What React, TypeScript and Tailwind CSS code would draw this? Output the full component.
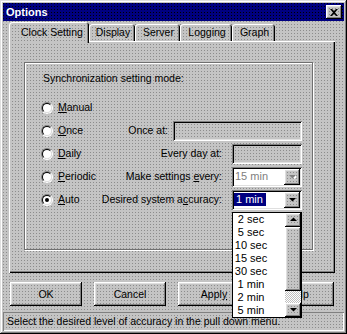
import React from "react"

const dither =
  "bg-[#c4c4c4] bg-[image:conic-gradient(from_270deg_at_1px_1px,#8c8c8c_90deg,#c4c4c4_0)] bg-[length:3px_3px]"
const raised = "shadow-[inset_-1px_-1px_#000,inset_1px_1px_#fff,inset_-2px_-2px_#808080,inset_2px_2px_#dfdfdf]"
const sunken = "shadow-[inset_1px_1px_#808080,inset_-1px_-1px_#fff,inset_2px_2px_#000,inset_-2px_-2px_#dfdfdf]"

function Radio({ checked }: { checked?: boolean }) {
  return (
    <div className="w-[12px] h-[12px] rounded-full border border-t-[#808080] border-l-[#808080] border-r-white border-b-white flex">
      <div className="flex-1 rounded-full border border-t-black border-l-black border-r-[#dfdfdf] border-b-[#dfdfdf] bg-white flex items-center justify-center">
        {checked && <div className="w-[4px] h-[4px] rounded-full bg-black" />}
      </div>
    </div>
  )
}

function Arrow({ up, disabled }: { up?: boolean; disabled?: boolean }) {
  return (
    <svg width="7" height="5" viewBox="0 0 7 5" className="block">
      {disabled && <path d="M2 1h7L5.5 5z" fill="#fff" />}
      <path d={up ? "M3.5 0.5L7 4H0z" : "M0 1h7L3.5 4.5z"} fill={disabled ? "#808080" : "#000"} />
    </svg>
  )
}

function DropButton({ disabled }: { disabled?: boolean }) {
  return (
    <div className={`w-[16px] h-[16px] ${dither} ${raised} flex items-center justify-center`}>
      <Arrow disabled={disabled} />
    </div>
  )
}

const tabs = [
  { label: "Display", w: "w-[46px]" },
  { label: "Server", w: "w-[45px]" },
  { label: "Logging", w: "w-[52px]" },
  { label: "Graph", w: "w-[43px]" },
]

const accuracy = ["2 sec", "5 sec", "10 sec", "15 sec", "30 sec", "1 min", "2 min", "5 min"]

export default function App() {
  return (
    <div
      className={`w-[347px] h-[334px] p-[3px] flex flex-col ${dither} shadow-[inset_-1px_-1px_#000,inset_1px_1px_#dfdfdf,inset_-2px_-2px_#808080,inset_2px_2px_#fff] font-['Liberation_Sans',Arial,sans-serif] text-[10.5px] text-black leading-[13px]`}
    >
      {/* title bar */}
      <div className="h-[18px] flex items-center pl-[3px] pr-[2px] bg-[#000080] bg-[image:conic-gradient(from_270deg_at_1px_1px,#000_90deg,#000080_0)] bg-[length:3px_3px]">
        <span className="text-white font-bold text-[11px]">Options</span>
        <div className={`ml-auto w-[16px] h-[14px] ${dither} ${raised} flex items-center justify-center`}>
          <svg width="8" height="7" viewBox="0 0 8 7">
            <path d="M0 0h2l2 2 2-2h2L5 3.5 8 7H6L4 5 2 7H0l3-3.5z" fill="#000" />
          </svg>
        </div>
      </div>

      {/* tabs */}
      <div className="mt-[1px] ml-[6px] w-[326px]">
        <div className="flex items-end h-[19px] relative z-10">
          <div
            className={`h-[21px] -mb-[2px] w-[80px] pl-[12px] flex items-center ${dither} rounded-t-[3px] shadow-[inset_1px_1px_#fff,inset_-1px_0_#000,inset_-2px_0_#808080]`}
          >
            Clock Setting
          </div>
          {tabs.map((t) => (
            <div
              key={t.label}
              className={`h-[17px] ${t.w} pl-[2px] flex items-center justify-center ${dither} rounded-t-[3px] shadow-[inset_1px_1px_#fff,inset_-1px_0_#000,inset_-2px_0_#808080]`}
            >
              {t.label}
            </div>
          ))}
        </div>

        <div className={`h-[232px] pt-[21px] pl-[15px] ${dither} shadow-[inset_1px_1px_#fff,inset_-1px_-1px_#000,inset_-2px_-2px_#808080]`}>
          <div className="w-[289px] h-[188px] border border-[#707070] shadow-[inset_1px_1px_#fff,1px_1px_#fff] pt-[9px]">
            <div className="pl-[18px]">Synchronization setting mode:</div>

            <div className="mt-[11px]">
              <div className="h-[23px] flex items-center pl-[16px]">
                <Radio />
                <span className="ml-[5px]">
                  <span className="underline">M</span>anual
                </span>
              </div>

              <div className="h-[23px] flex items-center pl-[16px] pr-[10px]">
                <Radio />
                <span className="ml-[5px]">
                  <span className="underline">O</span>nce
                </span>
                <span className="ml-auto mr-[5px]">Once at:</span>
                <div className={`w-[129px] h-[20px] ${dither} ${sunken}`} />
              </div>

              <div className="h-[23px] flex items-center pl-[16px] pr-[10px]">
                <Radio />
                <span className="ml-[5px]">
                  <span className="underline">D</span>aily
                </span>
                <span className="ml-auto mr-[10px]">Every day at:</span>
                <div className={`w-[70px] h-[20px] ${dither} ${sunken}`} />
              </div>

              <div className="h-[23px] flex items-center pl-[16px] pr-[10px]">
                <Radio />
                <span className="ml-[5px]">
                  <span className="underline">P</span>eriodic
                </span>
                <span className="ml-auto mr-[10px]">
                  Make settings <span className="underline">e</span>very:
                </span>
                <div className={`w-[70px] h-[20px] bg-white ${sunken} flex items-center pl-[3px] pr-[2px]`}>
                  <span className="text-[#808080] text-[11px]">15 min</span>
                  <div className="ml-auto">
                    <DropButton disabled />
                  </div>
                </div>
              </div>

              <div className="h-[23px] flex items-center pl-[16px] pr-[10px]">
                <Radio checked />
                <span className="ml-[5px]">
                  <span className="underline">A</span>uto
                </span>
                <span className="ml-auto mr-[10px]">
                  Desired system a<span className="underline">c</span>curacy:
                </span>
                <div className={`relative w-[70px] h-[20px] bg-white ${sunken} flex items-center pl-[2px] pr-[2px]`}>
                  <span className="bg-[#000080] text-white text-[11px] pl-[2px] pr-[3px] leading-[13px]">1 min</span>
                  <div className="ml-auto">
                    <DropButton />
                  </div>

                  {/* open drop-down list */}
                  <div className="absolute left-0 top-[22px] w-[70px] h-[106px] border border-black bg-white z-20 flex text-[11px]">
                    <div className="flex-1">
                      {accuracy.map((a) => (
                        <div key={a} className="h-[13px] w-[36px] text-center leading-[13px]">
                          {a}
                        </div>
                      ))}
                    </div>
                    <div className="w-[16px] flex flex-col">
                      <div className={`h-[14px] ${dither} ${raised} flex items-center justify-center`}>
                        <Arrow up />
                      </div>
                      <div className={`h-[64px] ${dither} ${raised}`} />
                      <div className="h-[12px] bg-[#c0c0c0] bg-[image:conic-gradient(#fff_25%,#c0c0c0_0_50%,#fff_0_75%,#c0c0c0_0)] bg-[length:2px_2px]" />
                      <div className={`h-[14px] ${dither} ${raised} flex items-center justify-center`}>
                        <Arrow />
                      </div>
                    </div>
                  </div>
                </div>
              </div>
            </div>
          </div>
        </div>
      </div>

      {/* buttons */}
      <div className="mt-[9px] pl-[7px] flex gap-[12px]">
        {["OK", "Cancel", "Apply", "Help"].map((b) => (
          <div key={b} className={`w-[72px] h-[24px] ${dither} ${raised} flex items-center justify-center`}>
            {b === "Apply" ? (
              <span>
                Appl<span className="underline">y</span>
              </span>
            ) : (
              b
            )}
          </div>
        ))}
      </div>

      {/* status bar */}
      <div className="mt-[6px] h-[19px] flex items-center pl-[4px] shadow-[inset_1px_1px_#808080,inset_-1px_-1px_#fff]">
        Select the desired level of accuracy in the pull down menu.
      </div>
    </div>
  )
}
